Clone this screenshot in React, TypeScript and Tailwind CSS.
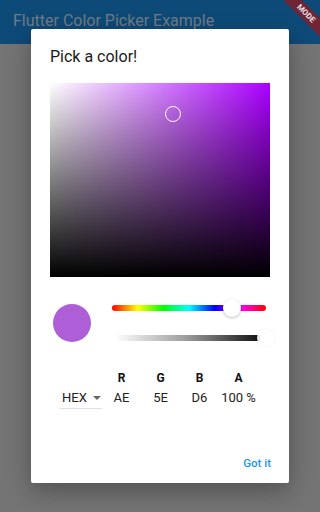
import React from 'react';

const channels = [
    { label: 'R', value: 'AE' },
    { label: 'G', value: '5E' },
    { label: 'B', value: 'D6' },
    { label: 'A', value: '100 %' },
];

const App: React.FC = () => {
    return (
        <div className="relative w-[320px] h-[512px] overflow-hidden bg-[#747474] font-['Roboto',sans-serif]">
            {/* App bar, dimmed by the dialog barrier */}
            <div className="h-[44px] bg-[#0e4a78] pl-[13px] flex items-start pt-[10px]">
                <span className="text-[16px] leading-[22px] text-[#6f7b86]">Flutter Color Picker Example</span>
            </div>

            {/* Debug banner */}
            <div className="absolute right-[-26px] top-[7px] w-[80px] h-[13px] rotate-45 bg-[#6e2536] flex items-center justify-center">
                <span className="text-[8px] font-bold leading-none text-[#e8dfe2]">MODE</span>
            </div>

            {/* Dialog */}
            <div className="absolute left-[31px] top-[29px] w-[258px] h-[454px] bg-white rounded-[2px] shadow-[0_8px_24px_rgba(0,0,0,0.3)] flex flex-col">
                <div className="pt-[18px] pl-[19px] text-[16px] leading-[20px] text-[#1a1a1a]">Pick a color!</div>

                {/* Saturation / value area */}
                <div className="relative ml-[19px] mt-[16px] w-[220px] h-[194px] bg-[#aa00ff]">
                    <div className="absolute inset-0 bg-gradient-to-r from-white to-transparent" />
                    <div className="absolute inset-0 bg-gradient-to-b from-transparent to-black" />
                    <div className="absolute left-[115px] top-[23px] w-[16px] h-[16px] rounded-full border-[1.5px] border-white" />
                </div>

                {/* Preview + sliders */}
                <div className="flex items-start mt-[27px] pl-[22px]">
                    <div className="w-[38px] h-[38px] rounded-full bg-[#ae5ed6]" />
                    <div className="relative ml-[21px] w-[160px] h-[40px]">
                        <div className="absolute left-0 top-[1px] w-[154px] h-[6px] rounded-full bg-[linear-gradient(to_right,#f00,#ff0,#0f0,#0ff,#00f,#f0f,#f00)]" />
                        <div className="absolute left-[111px] top-[-5px] w-[18px] h-[18px] rounded-full bg-white shadow-[0_1px_3px_rgba(0,0,0,0.25)]" />
                        <div className="absolute left-[3px] top-[31px] w-[145px] h-[6px] bg-[linear-gradient(to_right,#ffffff,#9a9a9a_50%,#111111)]" />
                        <div className="absolute left-[145px] top-[25px] w-[18px] h-[18px] rounded-full bg-white/90 shadow-[0_0_1.5px_rgba(0,0,0,0.15)]" />
                    </div>
                </div>

                {/* Channel values */}
                <div className="flex items-end mt-[26px] pl-[29px]">
                    <div className="w-[42px] h-[22px] flex items-center border-b border-[#e0e0e0]">
                        <span className="ml-[2px] text-[13px] leading-[16px] text-[#222]">HEX</span>
                        <svg className="ml-[6px]" width="8" height="4" viewBox="0 0 8 4">
                            <path d="M0 0 L8 0 L4 4 Z" fill="#666" />
                        </svg>
                    </div>
                    {channels.map(ch => (
                        <div key={ch.label} className="w-[39px] flex flex-col items-center">
                            <span className="text-[12px] leading-[16px] font-bold text-[#111]">{ch.label}</span>
                            <span className="mt-[4px] mb-[3px] text-[13px] leading-[16px] text-[#222]">{ch.value}</span>
                        </div>
                    ))}
                </div>

                <div className="mt-auto mb-[13px] pr-[18px] flex justify-end">
                    <span className="text-[11.5px] leading-[14px] font-medium text-[#2196f3]">Got it</span>
                </div>
            </div>
        </div>
    );
};

export default App;
